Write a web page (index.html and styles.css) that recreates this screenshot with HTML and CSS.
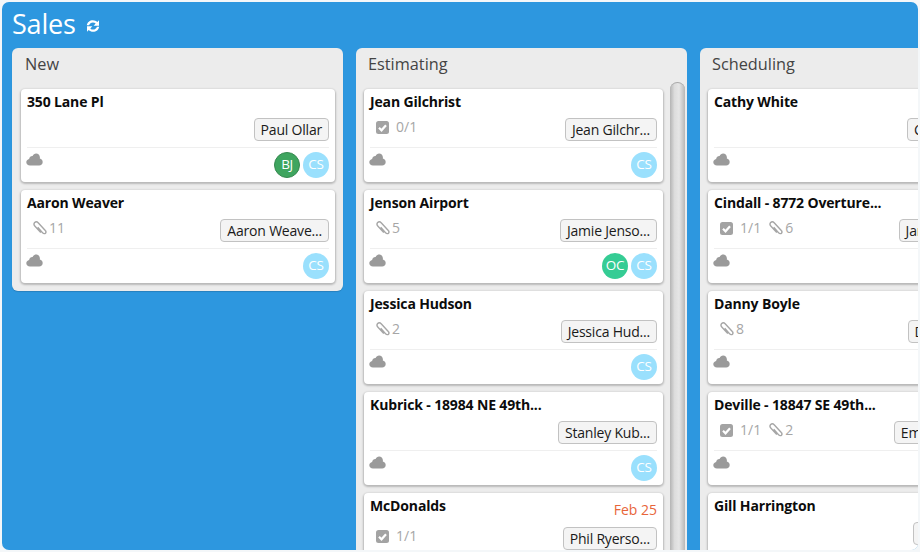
FILE: index.html
```html
<!DOCTYPE html>
<html lang="en">
<head>
<meta charset="utf-8">
<title>Sales</title>
<link rel="stylesheet" href="styles.css">
</head>
<body>
<svg class="defs" width="0" height="0" aria-hidden="true">
  <symbol id="cloud" viewBox="0 0 17 13"><path d="M4 12.500C1.800 12.500.3 11 .3 9.200c0-1.700 1.200-3 2.800-3.300C3.400 4 5 2.800 6.600 3c.6-1.500 2-2.500 3.500-2.500 2.100 0 3.700 1.600 3.800 3.700 0 .5 0 .9-.1 1.300 1.700.3 2.900 1.700 2.900 3.500 0 2-1.500 3.500-3.600 3.500z" fill="#9a9a9a"/></symbol>
  <symbol id="check" viewBox="0 0 13 13"><rect width="13" height="13" rx="2.500" fill="#a3a3a3"/><path d="M3 6.800l2.500 2.500L10 4.200" fill="none" stroke="#fff" stroke-width="2.200"/></symbol>
  <symbol id="clip" viewBox="0 0 14 14"><path d="M4.700 6.300l5 5.600c.8.900 2.100 1 2.800.3.700-.7.600-1.900-.2-2.700L5.400 2C4.200.8 2.700.6 1.700 1.600.7 2.600.9 4.100 2 5.300l5.800 6.300" fill="none" stroke="#a6a6a6" stroke-width="1.400"/></symbol>
</svg>
<div class="app">
  <header class="top">
    <h1 class="title">Sales</h1>
    <svg class="refresh" viewBox="0 0 14 14" aria-hidden="true"><path d="M.8 6.300C1.300 3.200 3.800 1.200 6.900 1.200c1.800 0 3.300.7 4.400 1.800L13 1.300v5.400H7.600l2.100-2.100C8.900 3.800 8 3.400 6.900 3.400c-1.800 0-3.300 1.200-3.800 2.900zM13.200 7.700c-.5 3.100-3 5.100-6.100 5.100-1.800 0-3.300-.7-4.400-1.800L1 12.700V7.300h5.400l-2.100 2.100c.8.800 1.700 1.200 2.800 1.200 1.800 0 3.300-1.200 3.800-2.900z" fill="#fff"/></svg>
  </header>
  <main class="board">

    <section class="column column-short">
      <h2 class="column-name">New</h2>
      <div class="cards">
        <article class="card">
          <div class="card-head"><span class="card-title">350 Lane Pl</span></div>
          <div class="card-mid"><span class="meta"></span><button class="owner">Paul Ollar</button></div>
          <div class="card-foot"><svg class="cloud"><use href="#cloud"/></svg><span class="avatars"><span class="avatar bj">BJ</span><span class="avatar cs">CS</span></span></div>
        </article>
        <article class="card">
          <div class="card-head"><span class="card-title">Aaron Weaver</span></div>
          <div class="card-mid"><span class="meta"><svg class="ico ico-clip"><use href="#clip"/></svg><span class="count count-clip">11</span></span><button class="owner">Aaron Weave...</button></div>
          <div class="card-foot"><svg class="cloud"><use href="#cloud"/></svg><span class="avatars"><span class="avatar cs">CS</span></span></div>
        </article>
      </div>
    </section>

    <section class="column column-scroll">
      <h2 class="column-name">Estimating</h2>
      <div class="column-body">
        <div class="cards">
          <article class="card">
            <div class="card-head"><span class="card-title">Jean Gilchrist</span></div>
            <div class="card-mid"><span class="meta"><svg class="ico"><use href="#check"/></svg><span class="count">0/1</span></span><button class="owner">Jean Gilchr...</button></div>
            <div class="card-foot"><svg class="cloud"><use href="#cloud"/></svg><span class="avatars"><span class="avatar cs">CS</span></span></div>
          </article>
          <article class="card">
            <div class="card-head"><span class="card-title">Jenson Airport</span></div>
            <div class="card-mid"><span class="meta"><svg class="ico ico-clip"><use href="#clip"/></svg><span class="count count-clip">5</span></span><button class="owner">Jamie Jenso...</button></div>
            <div class="card-foot"><svg class="cloud"><use href="#cloud"/></svg><span class="avatars"><span class="avatar oc">OC</span><span class="avatar cs">CS</span></span></div>
          </article>
          <article class="card">
            <div class="card-head"><span class="card-title">Jessica Hudson</span></div>
            <div class="card-mid"><span class="meta"><svg class="ico ico-clip"><use href="#clip"/></svg><span class="count count-clip">2</span></span><button class="owner">Jessica Hud...</button></div>
            <div class="card-foot"><svg class="cloud"><use href="#cloud"/></svg><span class="avatars"><span class="avatar cs">CS</span></span></div>
          </article>
          <article class="card">
            <div class="card-head"><span class="card-title">Kubrick - 18984 NE 49th...</span></div>
            <div class="card-mid"><span class="meta"></span><button class="owner">Stanley Kub...</button></div>
            <div class="card-foot"><svg class="cloud"><use href="#cloud"/></svg><span class="avatars"><span class="avatar cs">CS</span></span></div>
          </article>
          <article class="card">
            <div class="card-head"><span class="card-title">McDonalds</span><span class="due">Feb 25</span></div>
            <div class="card-mid"><span class="meta"><svg class="ico"><use href="#check"/></svg><span class="count">1/1</span></span><button class="owner">Phil Ryerso...</button></div>
          </article>
        </div>
        <div class="scrollbar"></div>
      </div>
    </section>

    <section class="column column-scroll">
      <h2 class="column-name">Scheduling</h2>
      <div class="column-body">
        <div class="cards">
          <article class="card">
            <div class="card-head"><span class="card-title">Cathy White</span></div>
            <div class="card-mid"><span class="meta"></span><button class="owner">Cathy White.</button></div>
            <div class="card-foot"><svg class="cloud"><use href="#cloud"/></svg><span class="avatars"><span class="avatar cs">CS</span></span></div>
          </article>
          <article class="card">
            <div class="card-head"><span class="card-title">Cindall - 8772 Overture...</span></div>
            <div class="card-mid"><span class="meta"><svg class="ico"><use href="#check"/></svg><span class="count">1/1</span><svg class="ico ico-clip ico-next"><use href="#clip"/></svg><span class="count count-clip">6</span></span><button class="owner">Jamie Cindal...</button></div>
            <div class="card-foot"><svg class="cloud"><use href="#cloud"/></svg><span class="avatars"><span class="avatar cs">CS</span></span></div>
          </article>
          <article class="card">
            <div class="card-head"><span class="card-title">Danny Boyle</span></div>
            <div class="card-mid"><span class="meta"><svg class="ico ico-clip"><use href="#clip"/></svg><span class="count count-clip">8</span></span><button class="owner">Danny Boyle</button></div>
            <div class="card-foot"><svg class="cloud"><use href="#cloud"/></svg><span class="avatars"><span class="avatar cs">CS</span></span></div>
          </article>
          <article class="card">
            <div class="card-head"><span class="card-title">Deville - 18847 SE 49th...</span></div>
            <div class="card-mid"><span class="meta"><svg class="ico"><use href="#check"/></svg><span class="count">1/1</span><svg class="ico ico-clip ico-next"><use href="#clip"/></svg><span class="count count-clip">2</span></span><button class="owner">Emma Deville..</button></div>
            <div class="card-foot"><svg class="cloud"><use href="#cloud"/></svg><span class="avatars"><span class="avatar cs">CS</span></span></div>
          </article>
          <article class="card">
            <div class="card-head"><span class="card-title">Gill Harrington</span></div>
            <div class="card-mid"><span class="meta"></span><button class="owner">Gill Harrin...</button></div>
          </article>
        </div>
        <div class="scrollbar"></div>
      </div>
    </section>

  </main>
</div>
</body>
</html>
```
FILE: styles.css
```css
html, body {
  margin: 0;
  height: 100%;
  background: #f4f7f9;
  overflow: hidden;
}
.defs { position: absolute; }
.app {
  box-sizing: border-box;
  height: 548px;
  margin: 2px;
  background: #2d97df;
  border-radius: 7px;
  font-family: "Open Sans", "Noto Sans", sans-serif;
  overflow: hidden;
  display: flex;
  flex-direction: column;
}
.top {
  height: 46px;
  flex: none;
  display: flex;
  align-items: center;
  padding-left: 10px;
  gap: 10px;
}
.title {
  margin: -2px 0 0;
  font-size: 27px;
  font-weight: 400;
  color: #fff;
  line-height: 42px;
  letter-spacing: -0.2px;
}
.refresh { width: 14px; height: 14px; margin-top: 1px; }
.board {
  flex: 1;
  min-height: 0;
  display: flex;
  align-items: flex-start;
  gap: 13px;
  padding-left: 10px;
}
.column {
  flex: none;
  width: 331px;
  box-sizing: border-box;
  height: 560px;
  background: #ececec;
  border-radius: 6px;
  display: flex;
  flex-direction: column;
  padding: 0 8px;
}
.column-short {
  height: 243px;
  padding-left: 9px;
  box-shadow: 0 1px 1px rgba(0,0,0,.15);
}
.column-scroll { padding-right: 2px; }
.column-name {
  margin: 0;
  padding-left: 4px;
  font-size: 16.3px;
  font-weight: 400;
  color: #444;
  height: 41px;
  line-height: 32px;
  flex: none;
}
.column-body {
  display: flex;
  gap: 7px;
  align-items: flex-start;
  flex: 1;
  min-height: 0;
}
.cards {
  flex: 1;
  min-width: 0;
  display: flex;
  flex-direction: column;
  gap: 8px;
}
.card {
  background: #fff;
  border-radius: 4px;
  box-shadow: 0 1px 2px 1px rgba(0,0,0,.22);
  padding: 3px 6px 4px;
  min-height: 93px;
  box-sizing: border-box;
  display: flex;
  flex-direction: column;
}
.card-head {
  display: flex;
  justify-content: space-between;
  align-items: flex-start;
  min-height: 26px;
  flex: none;
}
.card-title {
  font-size: 14px;
  font-weight: 700;
  color: #0c0c0c;
  line-height: 19px;
  letter-spacing: -0.15px;
}
.due {
  font-size: 14px;
  color: #e8653a;
  line-height: 19px;
  margin: 4px 0 8px;
}
.card-mid {
  display: flex;
  justify-content: space-between;
  align-items: flex-start;
  height: 29px;
  flex: none;
  border-bottom: 1px solid #efefef;
}
.meta {
  display: flex;
  align-items: center;
  padding-left: 6px;
  height: 18px;
  font-size: 14px;
  color: #a6a6a6;
}
.ico { width: 13px; height: 13px; flex: none; }
.ico-clip { width: 14px; height: 14px; }
.ico-next { margin-left: 8px; }
.count { margin-left: 7px; line-height: 18px; }
.count-clip { margin-left: 2px; }
.owner {
  flex: none;
  height: 23px;
  padding: 0 6px;
  font-family: inherit;
  font-size: 14px;
  line-height: 20px;
  letter-spacing: -0.2px;
  color: #1a1a1a;
  background: #f4f4f4;
  border: 1px solid #c2c2c2;
  border-radius: 4px;
  white-space: nowrap;
}
.card-foot {
  flex: 1;
  display: flex;
  justify-content: space-between;
  align-items: flex-start;
  padding-top: 4px;
}
.cloud { width: 17px; height: 13px; margin: 1px 0 0 -1px; }
.avatars { display: flex; gap: 3px; }
.avatar {
  width: 26px;
  height: 26px;
  box-sizing: border-box;
  border-radius: 50%;
  color: #fff;
  font-size: 13.500px;
  letter-spacing: -0.3px;
  line-height: 24px;
  text-align: center;
}
.cs { background: #9ae0fd; }
.bj { background: #3ea55f; border: 1px solid #35884f; line-height: 22px; }
.oc { background: #35cc94; }
.scrollbar {
  flex: none;
  width: 15px;
  height: 500px;
  margin-top: -7px;
  box-sizing: border-box;
  border-radius: 8px 8px 0 0;
  background: linear-gradient(90deg, #b4b4b4, #dcdcdc 30%, #e6e6e6 60%, #b8b8b8);
  border-top: 1px solid #a8a8a8;
}
```
